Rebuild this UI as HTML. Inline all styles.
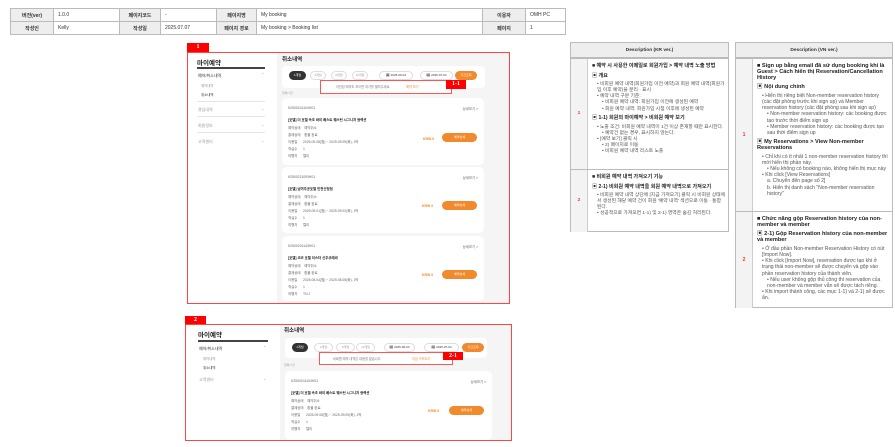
<!DOCTYPE html>
<html><head><meta charset="utf-8"><style>
*{margin:0;padding:0;box-sizing:border-box}
body{width:895px;height:447px;background:#fff;position:relative;overflow:hidden;font-family:"Liberation Sans","Noto Sans CJK KR",sans-serif;color:#333}
.a{position:absolute;white-space:nowrap}
table.h{position:absolute;left:10px;top:8px;border-collapse:collapse;font-size:5px}
table.h td{border:1px solid #bbb;height:13px;padding:0 4px;color:#333}
table.h td.l{background:#eee;text-align:center;font-weight:bold}
.frame{position:absolute;border:1.5px solid #f44}
.lab{position:absolute;background:#f00;color:#fff;font:bold 6px "Liberation Serif",serif;text-align:center;line-height:9px}
.pill{position:absolute;height:9px;border:1px solid #ddd;border-radius:5px;background:#fff;font-size:3px;line-height:7px;text-align:center;color:#999}
.card{position:absolute;background:#fff;border-radius:5px;font-size:3.4px;color:#666}
.btn{position:absolute;background:#f08a2c;border-radius:5px;color:#fff;font-size:3px;text-align:center}
.krw{position:absolute;color:#f08a2c;font-size:3.5px;font-weight:bold}
.desc{position:absolute;border:1px solid #bbb;font-size:4.8px;line-height:6.1px;color:#555}
.desc .hd{height:15px;background:#eee;border-bottom:1px solid #bbb;text-align:center;font-weight:bold;line-height:15px;font-size:4.8px;color:#333}
.row{position:absolute;left:0;right:0;border-top:1px solid #bbb}
.num{position:absolute;left:0;top:0;bottom:0;width:17px;background:#f3f3f3;border-right:1px solid #ccc;color:#e33;font-weight:bold;display:flex;align-items:center;justify-content:center}
.tx{position:absolute;left:21px;right:3px;top:4px;white-space:normal}
.tx b{color:#222;font-size:5.1px}
.tx p{margin-bottom:2.5px}
.tx .i{padding-left:5px}
.tx .ii{padding-left:10px}
.vi{font-size:5.1px;line-height:6.2px}
.vi .tx b{font-size:5.6px}
</style></head><body>

<table class="h">
<tr><td class="l" style="width:43px">버전(ver)</td><td style="width:66px">1.0.0</td><td class="l" style="width:41px">페이지코드</td><td style="width:56px">-</td><td class="l" style="width:40px">페이지명</td><td style="width:226px">My booking</td><td class="l" style="width:43px">이용자</td><td style="width:40px">OMH PC</td></tr>
<tr><td class="l">작성인</td><td>Kelly</td><td class="l">작성일</td><td>2025.07.07</td><td class="l">페이지 경로</td><td>My booking &gt; Booking list</td><td class="l">페이지</td><td>1</td></tr>
</table>

<!-- Frame 1 -->
<div class="a" style="left:277px;top:53px;width:232px;height:250px;background:#f5f5f5"></div>
<div class="lab" style="left:187px;top:43px;width:22px;height:9px">1</div>
<div class="a" style="left:197px;top:57px;font-size:6.5px;font-weight:bold;color:#222">마이예약</div>
<div class="a" style="left:197px;top:67px;width:68px;height:1.5px;background:#444"></div>
<div class="a" style="left:198px;top:73px;font-size:4px;color:#333">예약/취소내역</div><div class="a" style="left:261px;top:72px;font-size:4px;color:#888">⌃</div>
<div class="a" style="left:201px;top:83px;font-size:3.4px;color:#999">예약내역</div>
<div class="a" style="left:201px;top:92px;font-size:3.4px;color:#333">취소내역</div>
<div class="a" style="left:197px;top:101px;width:68px;height:1px;background:#e4e4e4"></div>
<div class="a" style="left:198px;top:107px;font-size:4px;color:#999">관심내역</div><div class="a" style="left:261px;top:106px;font-size:4px;color:#aaa">⌄</div>
<div class="a" style="left:197px;top:116px;width:68px;height:1px;background:#e4e4e4"></div>
<div class="a" style="left:198px;top:123px;font-size:4px;color:#999">회원정보</div><div class="a" style="left:261px;top:122px;font-size:4px;color:#aaa">⌄</div>
<div class="a" style="left:197px;top:132px;width:68px;height:1px;background:#e4e4e4"></div>
<div class="a" style="left:198px;top:139px;font-size:4px;color:#999">고객센터</div><div class="a" style="left:261px;top:138px;font-size:4px;color:#aaa">⌄</div>

<div class="a" style="left:282px;top:55px;font-size:5.5px;font-weight:bold;color:#222">취소내역</div>
<div class="a" style="left:282px;top:66px;width:203px;height:22px;background:#fff;border-radius:4px"></div>
<div class="pill" style="left:289px;top:71px;width:17px;background:#333;color:#fff;border-color:#333">1개월</div>
<div class="pill" style="left:310px;top:71px;width:16px">3개월</div>
<div class="pill" style="left:331px;top:71px;width:16px">6개월</div>
<div class="pill" style="left:352px;top:71px;width:16px">12개월</div>
<div class="pill" style="left:379px;top:71px;width:34px;color:#333">🗓 2025-06-04</div>
<div class="pill" style="left:420px;top:71px;width:33px;color:#333">🗓 2025-07-04</div>
<div class="btn" style="left:455px;top:71px;width:22px;height:9px;line-height:9px">기간조회</div>
<div class="a" style="left:320px;top:80px;width:132px;height:14px;border:1px solid #f55;background:#fff"></div>
<div class="a" style="left:336px;top:84px;font-size:3.2px;color:#777">이전된 예약도 보이면 여기를 펼쳐주세요.</div>
<div class="a" style="left:406px;top:84px;font-size:3.2px;color:#f08a2c">예약 보기</div>
<div class="lab" style="left:446px;top:80px;width:20px;height:9px">1-1</div>
<div class="a" style="left:282px;top:91px;font-size:3px;color:#999">전체 7건</div>

<div class="card" style="left:282px;top:98px;width:202px;height:67px">
<div class="a" style="left:6px;top:8px">K2500241104H01</div><div class="a" style="right:6px;top:8px">상세보기 &gt;</div>
<div class="a" style="left:6px;top:19px;color:#222;font-weight:bold">[호텔] 더 호텔 속초 바이 베스트 웨스턴 시그니처 컬렉션</div>
<div class="a" style="left:6px;top:27px">예약상태 &nbsp;&nbsp; 예약취소</div>
<div class="a" style="left:6px;top:34px">결제상태 &nbsp;&nbsp; 환불 완료</div>
<div class="a" style="left:6px;top:41px">이용일 &nbsp;&nbsp;&nbsp;&nbsp; 2025.09.08(월) ~ 2025.09.09(화), 1박</div>
<div class="a" style="left:6px;top:48px">객실수 &nbsp;&nbsp;&nbsp;&nbsp; 1</div>
<div class="a" style="left:6px;top:55px">여행자 &nbsp;&nbsp;&nbsp;&nbsp; 켈리</div>
</div>
<div class="krw" style="left:423px;top:137px">KRW 0</div><div class="btn" style="left:442px;top:133px;width:35px;height:9px;line-height:9px">예약상세</div>

<div class="card" style="left:282px;top:167px;width:202px;height:66px">
<div class="a" style="left:6px;top:8px">K2500211093H01</div><div class="a" style="right:6px;top:8px">상세보기 &gt;</div>
<div class="a" style="left:6px;top:19px;color:#222;font-weight:bold">[호텔] 남여주공호텔 인천신청점</div>
<div class="a" style="left:6px;top:27px">예약상태 &nbsp;&nbsp; 예약취소</div>
<div class="a" style="left:6px;top:34px">결제상태 &nbsp;&nbsp; 환불 완료</div>
<div class="a" style="left:6px;top:41px">이용일 &nbsp;&nbsp;&nbsp;&nbsp; 2025.09.01(월) ~ 2025.09.02(화), 1박</div>
<div class="a" style="left:6px;top:48px">객실수 &nbsp;&nbsp;&nbsp;&nbsp; 1</div>
<div class="a" style="left:6px;top:55px">여행자 &nbsp;&nbsp;&nbsp;&nbsp; 켈리</div>
</div>
<div class="krw" style="left:422px;top:204px">KRW 0</div><div class="btn" style="left:442px;top:201px;width:35px;height:9px;line-height:9px">예약상세</div>

<div class="card" style="left:282px;top:236px;width:202px;height:65px">
<div class="a" style="left:6px;top:8px">K2500201143H01</div><div class="a" style="right:6px;top:8px">상세보기 &gt;</div>
<div class="a" style="left:6px;top:19px;color:#222;font-weight:bold">[호텔] 코코 호텔 이스타 신주쿠에비</div>
<div class="a" style="left:6px;top:27px">예약상태 &nbsp;&nbsp; 예약취소</div>
<div class="a" style="left:6px;top:34px">결제상태 &nbsp;&nbsp; 환불 완료</div>
<div class="a" style="left:6px;top:41px">이용일 &nbsp;&nbsp;&nbsp;&nbsp; 2025.08.04(월) ~ 2025.08.05(화), 1박</div>
<div class="a" style="left:6px;top:48px">객실수 &nbsp;&nbsp;&nbsp;&nbsp; 1</div>
<div class="a" style="left:6px;top:55px">여행자 &nbsp;&nbsp;&nbsp;&nbsp; TN J</div>
</div>
<div class="krw" style="left:422px;top:273px">KRW 0</div><div class="btn" style="left:442px;top:270px;width:35px;height:9px;line-height:9px">예약상세</div>
<div class="frame" style="left:187px;top:52px;width:323px;height:252px"></div>

<!-- Frame 2 -->
<div class="a" style="left:280px;top:325px;width:231px;height:116px;background:#f5f5f5"></div>
<div class="lab" style="left:185px;top:316px;width:21px;height:8px;line-height:8px">2</div>
<div class="a" style="left:198px;top:329px;font-size:6.5px;font-weight:bold;color:#222">마이예약</div>
<div class="a" style="left:198px;top:340px;width:70px;height:1.5px;background:#444"></div>
<div class="a" style="left:199px;top:346px;font-size:4px;color:#333">예약/취소내역</div><div class="a" style="left:263px;top:345px;font-size:4px;color:#888">⌃</div>
<div class="a" style="left:203px;top:356px;font-size:3.4px;color:#999">예약내역</div>
<div class="a" style="left:203px;top:365px;font-size:3.4px;color:#333">취소내역</div>
<div class="a" style="left:199px;top:377px;font-size:4px;color:#999">고객센터</div><div class="a" style="left:263px;top:376px;font-size:4px;color:#aaa">⌄</div>

<div class="a" style="left:284px;top:326px;font-size:5.5px;font-weight:bold;color:#222">취소내역</div>
<div class="a" style="left:285px;top:338px;width:202px;height:20px;background:#fff;border-radius:4px"></div>
<div class="pill" style="left:292px;top:343px;width:16px;background:#333;color:#fff;border-color:#333">1개월</div>
<div class="pill" style="left:314px;top:343px;width:19px">3개월</div>
<div class="pill" style="left:336px;top:343px;width:19px">6개월</div>
<div class="pill" style="left:356px;top:343px;width:19px">12개월</div>
<div class="pill" style="left:384px;top:343px;width:31px;color:#333">🗓 2025-06-04</div>
<div class="pill" style="left:424px;top:343px;width:35px;color:#333">🗓 2025-07-04</div>
<div class="btn" style="left:462px;top:343px;width:22px;height:9px;line-height:9px">기간조회</div>
<div class="a" style="left:319px;top:352px;width:134px;height:13px;border:1px solid #f55;background:#fff"></div>
<div class="a" style="left:333px;top:356px;font-size:3.2px;color:#777">비회원 예약 내역은 대응할 없습니다.</div>
<div class="a" style="left:412px;top:356px;font-size:3.2px;color:#f08a2c">지금 가져오기</div>
<div class="lab" style="left:443px;top:352px;width:20px;height:8px;line-height:8px">2-1</div>
<div class="a" style="left:284px;top:363px;font-size:3px;color:#999">전체 7건</div>
<div class="card" style="left:285px;top:371px;width:207px;height:69px">
<div class="a" style="left:6px;top:8px">K2500241104H01</div><div class="a" style="right:6px;top:8px">상세보기 &gt;</div>
<div class="a" style="left:6px;top:19px;color:#222;font-weight:bold">[호텔] 더 호텔 속초 바이 베스트 웨스턴 시그니처 컬렉션</div>
<div class="a" style="left:6px;top:27px">예약상태 &nbsp;&nbsp; 예약취소</div>
<div class="a" style="left:6px;top:34px">결제상태 &nbsp;&nbsp; 환불 완료</div>
<div class="a" style="left:6px;top:41px">이용일 &nbsp;&nbsp;&nbsp;&nbsp; 2025.09.08(월) ~ 2025.09.09(화), 1박</div>
<div class="a" style="left:6px;top:48px">객실수 &nbsp;&nbsp;&nbsp;&nbsp; 1</div>
<div class="a" style="left:6px;top:55px">여행자 &nbsp;&nbsp;&nbsp;&nbsp; 켈리</div>
</div>
<div class="krw" style="left:428px;top:409px">KRW 0</div><div class="btn" style="left:449px;top:406px;width:35px;height:9px;line-height:9px">예약상세</div>
<div class="frame" style="left:185px;top:324px;width:327px;height:117px"></div>

<!-- KR description -->
<div class="desc" style="left:570px;top:42px;width:159px;height:190px">
<div class="hd">Description (KR ver.)</div>
<div class="row" style="top:15px;height:111px"><div class="num">1</div>
<div class="tx"><p><b>■ 예약 시 사용한 이메일로 회원가입 &gt; 예약 내역 노출 방법</b></p>
<p><b>▣ 개요</b></p>
<div class="i">• 비회원 예약 내역(회원가입 이전 예약)과 회원 예약 내역(회원가입 이후 예약)을 분리 · 표시</div>
<div class="i">• 예약 내역 구분 기준:</div>
<div class="ii">• 비회원 예약 내역: 회원가입 이전에 생성된 예약</div>
<div class="ii" style="margin-bottom:2.5px">• 회원 예약 내역: 회원가입 시점 이후에 생성된 예약</div>
<p><b>▣ 1-1) 회원의 마이예약 &gt; 비회원 예약 보기</b></p>
<div class="i">• 노출 조건: 비회원 예약 내역이 1건 이상 존재할 때만 표시한다.</div>
<div class="ii">• 예약건 없는 경우, 표시하지 않는다.</div>
<div class="i">• [예약 보기] 클릭 시</div>
<div class="ii">• 2) 페이지로 이동</div>
<div class="ii">• 비회원 예약 내역 리스트 노출</div></div></div>
<div class="row" style="top:126px;height:63px"><div class="num">2</div>
<div class="tx"><p><b>■ 비회원 예약 내역 가져오기 기능</b></p>
<p><b>▣ 2-1) 비회원 예약 내역을 회원 예약 내역으로 가져오기</b></p>
<div class="i">• 비회원 예약 내역 상단에 [지금 가져오기] 클릭 시 비회원 상태에서 생성된 해당 예약 건이 회원 '예약 내역' 섹션으로 이동 · 통합된다.</div>
<div class="i">• 성공적으로 가져오면 1-1) 및 2-1) 영역은 숨김 처리된다.</div></div></div>
</div>

<!-- VI description -->
<div class="desc vi" style="left:735px;top:42px;width:158px;height:266px">
<div class="hd">Description (VN ver.)</div>
<div class="row" style="top:15px;height:153px"><div class="num">1</div>
<div class="tx"><p><b>■ Sign up bằng email đã sử dụng booking khi là Guest &gt; Cách hiển thị Reservation/Cancellation History</b></p>
<p><b>▣ Nội dung chính</b></p>
<div class="i">• Hiển thị riêng biệt Non-member reservation history (các đặt phòng trước khi sign up) và Member reservation history (các đặt phòng sau khi sign up)</div>
<div class="ii">• Non-member reservation history: các booking được tạo trước thời điểm sign up</div>
<div class="ii" style="margin-bottom:2.5px">• Member reservation history: các booking được tạo sau thời điểm sign up</div>
<p><b>▣ My Reservations &gt; View Non-member Reservations</b></p>
<div class="i">• Chỉ khi có ít nhất 1 non-member reservation history thì mới hiển thị phần này.</div>
<div class="ii">• Nếu không có booking nào, không hiển thị mục này</div>
<div class="i">• Khi click [View Reservations]</div>
<div class="ii">a. Chuyển đến page số 2]</div>
<div class="ii">b. Hiển thị danh sách "Non-member reservation history"</div></div></div>
<div class="row" style="top:168px;height:97px"><div class="num">2</div>
<div class="tx"><p><b>■ Chức năng gộp Reservation history của non-member và member</b></p>
<p><b>▣ 2-1) Gộp Reservation history của non-member và member</b></p>
<div class="i">• Ở đầu phần Non-member Reservation History có nút [Import Now].</div>
<div class="i">• Khi click [Import Now], reservation được tạo khi ở trạng thái non-member sẽ được chuyển và gộp vào phần reservation history của thành viên.</div>
<div class="ii">• Nếu user không gộp thủ công thì reservation của non-member và member vẫn sẽ được tách riêng.</div>
<div class="i">• Khi import thành công, các mục 1-1) và 2-1) sẽ được ẩn.</div></div></div>
</div>
</body></html>
